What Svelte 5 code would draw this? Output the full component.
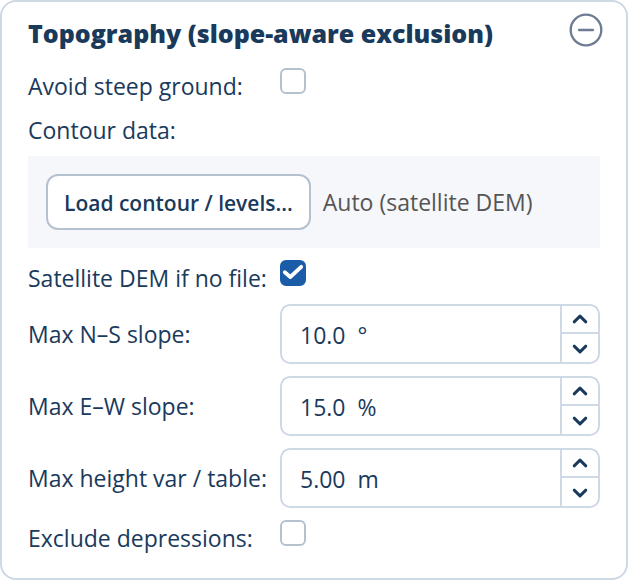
<script>
  let open = $state(true);
  let avoidSteep = $state(false);
  let satelliteDem = $state(true);
  let excludeDepressions = $state(false);
  let limits = $state([
    { id: 'ns', label: 'Max N–S slope:', value: 10, digits: 1, step: 0.5, unit: '°' },
    { id: 'ew', label: 'Max E–W slope:', value: 15, digits: 1, step: 0.5, unit: '%' },
    { id: 'height', label: 'Max height var / table:', value: 5, digits: 2, step: 0.25, unit: 'm' }
  ]);

  const format = (item) => `${item.value.toFixed(item.digits)}  ${item.unit}`;

  function commit(item, event) {
    const parsed = parseFloat(event.target.value);
    if (!Number.isNaN(parsed)) item.value = Math.max(0, parsed);
    event.target.value = format(item);
  }

  function nudge(item, direction) {
    item.value = Math.max(0, item.value + direction * item.step);
  }
</script>

{#snippet tick()}
  <svg class="tick" viewBox="0 0 26 26" aria-hidden="true">
    <path d="M4.8 12.3 L10.3 17 L21.2 6.8" />
  </svg>
{/snippet}

<section class="card">
  <header>
    <h2>Topography (slope-aware exclusion)</h2>
    <button class="collapse" type="button" aria-label="Collapse section" aria-expanded={open} onclick={() => (open = !open)}>
      <svg viewBox="0 0 34 34" aria-hidden="true">
        <circle cx="17" cy="17" r="15.3" />
        <path d="M10 17 H24" />
        {#if !open}<path d="M17 10 V24" />{/if}
      </svg>
    </button>
  </header>

  {#if open}
    <div class="form">
      <label class="low" for="avoid">Avoid steep ground:</label>
      <span class="check">
        <input id="avoid" type="checkbox" bind:checked={avoidSteep} />
        {@render tick()}
      </span>

      <label class="low" for="load">Contour data:</label>
      <div class="source">
        <button id="load" class="load" type="button">Load contour / levels...</button>
        <span>Auto (satellite DEM)</span>
      </div>

      <label class="low" for="satellite">Satellite DEM if no file:</label>
      <span class="check">
        <input id="satellite" type="checkbox" bind:checked={satelliteDem} />
        {@render tick()}
      </span>

      {#each limits as item (item.id)}
        <label for={item.id}>{item.label}</label>
        <div class="spin">
          <input id={item.id} type="text" value={format(item)} onchange={(e) => commit(item, e)} />
          <div class="arrows">
            <button type="button" aria-label="Increase" onclick={() => nudge(item, 1)}>
              <svg viewBox="0 0 16 10" aria-hidden="true"><path d="M2.2 7.8 L8 2.2 L13.8 7.8" /></svg>
            </button>
            <button type="button" aria-label="Decrease" onclick={() => nudge(item, -1)}>
              <svg viewBox="0 0 16 10" aria-hidden="true"><path d="M2.2 2.2 L8 7.8 L13.8 2.2" /></svg>
            </button>
          </div>
        </div>
      {/each}

      <label class="low" for="depressions">Exclude depressions:</label>
      <span class="check">
        <input id="depressions" type="checkbox" bind:checked={excludeDepressions} />
        {@render tick()}
      </span>
    </div>
  {/if}
</section>

<style>
  .card {
    box-sizing: border-box;
    padding: 10px 26px 26px;
    border: 2px solid #cfd8e5;
    border-radius: 16px;
    background: #fff;
    color: #1a3a5c;
    font: 23px/28px "Segoe UI", "Open Sans", "Noto Sans", sans-serif;
  }

  header {
    display: flex;
    align-items: flex-start;
    justify-content: space-between;
    height: 56px;
    margin-right: -3px;
  }

  h2 {
    margin: 0;
    font-size: 25px;
    line-height: 42px;
    font-weight: 800;
    white-space: nowrap;
  }

  button,
  input {
    margin: 0;
    font: inherit;
    color: inherit;
  }

  button {
    padding: 0;
    border: 0;
    background: none;
    cursor: pointer;
  }

  svg {
    display: block;
    fill: none;
    stroke: currentColor;
    stroke-linecap: round;
    stroke-linejoin: round;
  }

  .collapse {
    width: 34px;
    height: 34px;
    flex: none;
    margin-top: 1px;
    color: #6d7c93;
  }

  .collapse svg {
    stroke-width: 2.3;
  }

  .form {
    display: grid;
    grid-template-columns: 240px minmax(0, 1fr);
    gap: 12px;
  }

  label {
    align-self: center;
    white-space: nowrap;
  }

  .low {
    padding-top: 4px;
  }

  .check {
    position: relative;
    width: 26px;
    height: 26px;
  }

  .check input {
    appearance: none;
    box-sizing: border-box;
    display: block;
    width: 26px;
    height: 26px;
    border: 2px solid #b6c1d0;
    border-radius: 6px;
    background: #fff;
  }

  .check input:checked {
    border-color: #1a5ca8;
    background: #1a5ca8;
  }

  .tick {
    position: absolute;
    inset: 0;
    color: #fff;
    stroke-width: 3.8;
    pointer-events: none;
    visibility: hidden;
  }

  .check input:checked + .tick {
    visibility: visible;
  }

  .source {
    grid-column: 1 / -1;
    display: flex;
    align-items: center;
    gap: 12px;
    padding: 18px;
    background: #f5f7fb;
    color: #555;
    white-space: nowrap;
  }

  .load {
    box-sizing: border-box;
    height: 56px;
    padding: 2px 16px 0;
    border: 2px solid #b6c1d0;
    border-radius: 12px;
    background: #fff;
    color: #1a3a5c;
    font-size: 21px;
    font-weight: 600;
  }

  .spin {
    display: flex;
    box-sizing: border-box;
    height: 60px;
    border: 2px solid #cfd8e5;
    border-radius: 10px;
    overflow: hidden;
  }

  .spin input {
    flex: 1;
    min-width: 0;
    box-sizing: border-box;
    padding: 2px 18px 0;
    border: 0;
    outline: 0;
    background: none;
  }

  .arrows {
    display: grid;
    grid-template-rows: 26px 1fr;
    flex: none;
    width: 36px;
    border-left: 2px solid #cfd8e5;
  }

  .arrows button {
    display: grid;
    place-items: center;
  }

  .arrows button + button {
    padding-top: 2px;
    border-top: 2px solid #cfd8e5;
  }

  .arrows svg {
    width: 16px;
    height: 10px;
    stroke-width: 3;
  }
</style>
